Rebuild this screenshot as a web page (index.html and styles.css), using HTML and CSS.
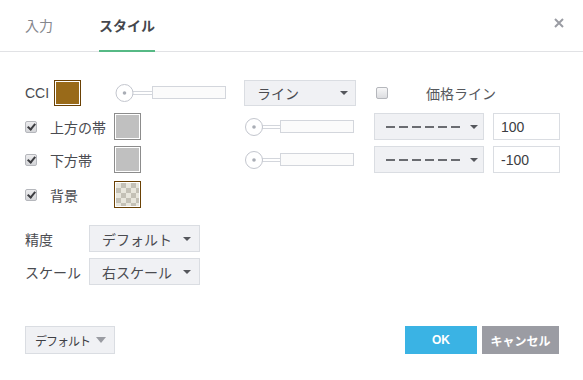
FILE: index.html
```html
<!DOCTYPE html>
<html lang="ja">
<head>
<meta charset="utf-8">
<link rel="stylesheet" href="styles.css">
</head>
<body>
<div class="dialog">
  <header class="tabs">
    <div class="tab">入力</div>
    <div class="tab active">スタイル</div>
    <span class="close"><svg width="10" height="10" viewBox="0 0 10 10"><path d="M1 1L9 9M9 1L1 9" stroke="#9a9ca3" stroke-width="2"/></svg></span>
  </header>

  <main class="content">
    <div class="row r1">
      <span class="lbl cci">CCI</span>
      <span class="swatch brown"></span>
      <svg class="slider s1" width="111" height="20" viewBox="0 0 111 20"><rect x="17.5" y="8.5" width="21" height="3" fill="#fff" stroke="#d3d6dc"/><rect x="37.5" y="3.5" width="73" height="12" fill="#fbfbfb" stroke="#d3d6dc"/><circle cx="9.5" cy="10" r="8.5" fill="#fff" stroke="#c3c6ce"/><circle cx="9.5" cy="10" r="1.8" fill="#a9adb5"/></svg>
      <div class="select sel-line"><span class="val">ライン</span><span class="caret"></span></div>
      <span class="cb"></span>
      <span class="lbl price">価格ライン</span>
    </div>

    <div class="row r2">
      <span class="cb checked"></span>
      <span class="lbl name">上方の帯</span>
      <span class="swatch gray"></span>
      <svg class="slider s2" width="109" height="20" viewBox="0 0 109 20"><rect x="17" y="8.5" width="19" height="3" fill="#fff" stroke="#d3d6dc"/><rect x="35.5" y="3.5" width="73" height="12" fill="#fbfbfb" stroke="#d3d6dc"/><circle cx="9" cy="10" r="8.5" fill="#fff" stroke="#c3c6ce"/><circle cx="9" cy="10" r="1.8" fill="#a9adb5"/></svg>
      <div class="select sel-dash"><span class="dash"></span><span class="caret"></span></div>
      <input class="num" type="text" value="100">
    </div>

    <div class="row r3">
      <span class="cb checked"></span>
      <span class="lbl name">下方帯</span>
      <span class="swatch gray"></span>
      <svg class="slider s2" width="109" height="20" viewBox="0 0 109 20"><rect x="17" y="8.5" width="19" height="3" fill="#fff" stroke="#d3d6dc"/><rect x="35.5" y="3.5" width="73" height="12" fill="#fbfbfb" stroke="#d3d6dc"/><circle cx="9" cy="10" r="8.5" fill="#fff" stroke="#c3c6ce"/><circle cx="9" cy="10" r="1.8" fill="#a9adb5"/></svg>
      <div class="select sel-dash"><span class="dash"></span><span class="caret"></span></div>
      <input class="num" type="text" value="-100">
    </div>

    <div class="row r4">
      <span class="cb checked"></span>
      <span class="lbl name">背景</span>
      <span class="swatch checker"></span>
    </div>

    <div class="row r5">
      <span class="lbl opt">精度</span>
      <div class="select sel-opt"><span class="val">デフォルト</span><span class="caret"></span></div>
    </div>
    <div class="row r6">
      <span class="lbl opt">スケール</span>
      <div class="select sel-opt"><span class="val">右スケール</span><span class="caret"></span></div>
    </div>
  </main>

  <footer class="footer">
    <div class="select sel-default"><span class="val">デフォルト</span><span class="caret light"></span></div>
    <div class="btns">
      <button class="btn ok">OK</button>
      <button class="btn cancel">キャンセル</button>
    </div>
  </footer>
</div>
</body>
</html>
```
FILE: styles.css
```css
* { box-sizing: border-box; }
html, body { margin: 0; padding: 0; background: #fff; }
body {
  font-family: "Liberation Sans", "Noto Sans CJK JP", sans-serif;
  color: #4a4b50;
  font-size: 14px;
}
.dialog { width: 583px; height: 380px; display: flex; flex-direction: column; }

.tabs {
  display: flex;
  height: 52px;
  border-bottom: 1px solid #e1e2e5;
  padding-left: 25px;
  align-items: stretch;
}
.tab {
  display: flex;
  align-items: center;
  margin-bottom: -1px;
  border-bottom: 2px solid transparent;
  padding-bottom: 1px;
  color: #85878d;
  font-size: 14px;
  margin-right: 46px;
}
.tab.active {
  color: #45474d;
  font-weight: bold;
  border-bottom-color: #56b985;
}
.close {
  margin-left: auto;
  margin-right: 19px;
  margin-top: 18px;
  height: 10px;
  display: block;
}
.close svg { display: block; }

.content {
  display: flex;
  flex-direction: column;
  padding: 28px 0 0 25px;
}
.row { display: flex; align-items: center; height: 26px; }
.r2 { margin-top: 7px; height: 27px; }
.r3 { margin-top: 6px; height: 27px; }
.r4 { margin-top: 8px; height: 27px; }
.r5 { margin-top: 17px; height: 27px; }
.r6 { margin-top: 6px; height: 27px; }

.lbl { white-space: nowrap; }
.cci { width: 29px; }
.name { width: 64px; }
.price { margin-left: 38px; color: #55575c; }
.opt { width: 64px; }

.swatch {
  width: 27px;
  height: 27px;
  border: 1px solid #888;
  box-shadow: inset 0 0 0 1px #fff;
  display: block;
  flex: none;
}
.swatch.brown { background: #996a19; border-color: #6a4104; height: 26px; }
.swatch.gray { background: #c0c0c0; border-color: #8c8c8c; }
.swatch.checker {
  border-color: #6a4104;
  background-color: #e8e6dc;
  background-image:
    linear-gradient(45deg, #c4c1b6 25%, transparent 25%, transparent 75%, #c4c1b6 75%),
    linear-gradient(45deg, #c4c1b6 25%, transparent 25%, transparent 75%, #c4c1b6 75%);
  background-size: 10px 10px;
  background-position: 1px 1px, 6px 6px;
}

.slider { display: block; flex: none; }
.s1 { margin-left: 34px; }
.s2 { margin-left: 104px; }

.select {
  display: flex;
  align-items: center;
  background: #f0f1f4;
  border: 1px solid #dadde2;
  height: 100%;
  padding-left: 12px;
  padding-right: 7px;
  flex: none;
}
.select .val { flex: 1; white-space: nowrap; color: #4a4b50; }
.caret {
  width: 0; height: 0;
  border-left: 4px solid transparent;
  border-right: 4px solid transparent;
  border-top: 4px solid #55575c;
  margin-left: auto;
}
.caret.light { border-top-color: #9a9ca2; border-left-width: 5px; border-right-width: 5px; border-top-width: 6px; }

.sel-line { width: 112px; margin-left: 18px; }
.sel-dash { width: 110px; margin-left: 20px; padding-left: 11px; padding-right: 5px; }
.dash {
  width: 74px;
  height: 2px;
  background: repeating-linear-gradient(90deg, #6a6c71 0 9px, transparent 9px 13px);
}
.sel-opt { width: 111px; margin-left: 0; padding-right: 8px; }

.cb {
  width: 12px;
  height: 12px;
  border: 1px solid #b5b7bc;
  border-radius: 2px;
  background: linear-gradient(#f7f7f8, #dcdde0);
  display: block;
  flex: none;
  position: relative;
}
.r1 .cb { margin-left: 20px; }
.row .cb.checked { margin-right: 13px; background: linear-gradient(#ececee, #d4d5d8); }
.cb.checked::after {
  content: "";
  position: absolute;
  left: 2.5px;
  top: 0.5px;
  width: 3px;
  height: 6px;
  border-right: 2px solid #3d3e42;
  border-bottom: 2px solid #3d3e42;
  transform: rotate(40deg);
}

.num {
  width: 67px;
  height: 100%;
  margin-left: 9px;
  border: 1px solid #dadde2;
  background: #fff;
  font: 14px "Liberation Sans", sans-serif;
  color: #3c3d42;
  padding: 0 0 0 7px;
  outline: none;
}

.footer {
  margin-top: auto;
  display: flex;
  align-items: center;
  padding: 0 24px 25px 25px;
  height: 55px;
}
.sel-default {
  width: 90px;
  height: 28px;
  font-size: 12px;
  padding-left: 9px;
  padding-right: 8px;
}
.sel-default .val { font-size: 12px; color: #3e3f44; letter-spacing: -1px; flex: none; }
.btns { margin-left: auto; display: flex; gap: 5px; }
.btn {
  border: none;
  height: 28px;
  color: #fff;
  font: bold 12px "Liberation Sans", "Noto Sans CJK JP", sans-serif;
  padding: 0;
}
.btn.ok { width: 72px; background: #3ab3e4; }
.btn.cancel { width: 77px; background: #9b9ca3; }
```
